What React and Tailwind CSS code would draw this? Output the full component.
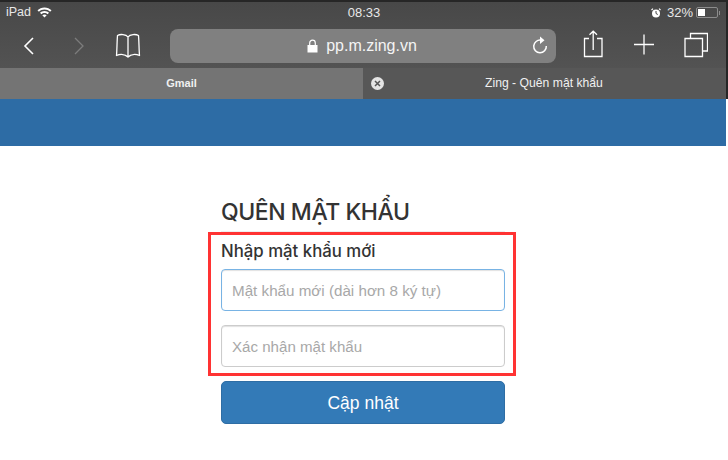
import React from "react";

const Sans = '[font-family:"Liberation_Sans",Arial,sans-serif]';

const ToolIcon = ({ w, children }) => (
  <svg width={w} height="44" viewBox={`0 0 ${w} 44`} fill="none" stroke="#fff" strokeWidth="1.3" className="shrink-0">
    {children}
  </svg>
);

const App = () => {
  return (
    <div className={`w-[728px] h-[460px] overflow-hidden bg-white ${Sans}`}>
      {/* Safari chrome */}
      <div className="border-t-2 border-r-2 border-[#262626] bg-gradient-to-b from-[#484848] to-[#585858] text-white">
        {/* Status bar */}
        <div className="grid grid-cols-3 items-center h-[21px] pl-[6px] pr-[6px] text-[13px] leading-none text-[#e8e8e8]">
          <div className="flex items-center gap-[6px]">
            <span className="text-[12.500px]">iPad</span>
            <svg width="15" height="11" viewBox="0 0 15 11" fill="#fff">
              <path d="M7.5 0.5C4.7 0.5 2.3 1.6 0.5 3.3L1.9 4.8C3.4 3.4 5.3 2.5 7.5 2.5S11.6 3.4 13.1 4.8L14.5 3.3C12.7 1.6 10.3 0.5 7.5 0.5Z" />
              <path d="M7.5 4C5.7 4 4.2 4.7 3 5.8L4.4 7.2C5.2 6.5 6.3 6 7.5 6S9.8 6.5 10.6 7.2L12 5.8C10.8 4.7 9.3 4 7.5 4Z" />
              <path d="M7.5 7.4C6.6 7.4 5.9 7.7 5.3 8.2L7.5 10.6L9.7 8.2C9.1 7.7 8.4 7.4 7.5 7.4Z" />
            </svg>
          </div>
          <div className="text-center pl-[2px]">08:33</div>
          <div className="flex items-center justify-end gap-[3px]">
            <svg width="10" height="10" viewBox="0 0 10 10" className="mr-[3px]">
              <circle cx="5" cy="5.4" r="4" fill="#fff" />
              <path d="M5 3V5.5L6.8 6.5" stroke="#444" strokeWidth="1" fill="none" />
              <path d="M0.5 2L2 0.6M9.5 2L8 0.6" stroke="#fff" strokeWidth="1.2" />
            </svg>
            <span>32%</span>
            <div className="flex items-center">
              <div className="w-[22px] h-[11px] border border-[#8c8c8c] rounded-[2px] p-px">
                <div className="w-[7px] h-full bg-white" />
              </div>
              <div className="w-[1px] h-[4px] ml-[1px] bg-[#8c8c8c]" />
            </div>
          </div>
        </div>

        {/* Toolbar */}
        <div className="flex items-center h-[45px]">
          <div className="ml-[20px] w-[150px] flex items-center">
            <ToolIcon w={18}>
              <path d="M13 14L5 22L13 30" strokeWidth="1.6" />
            </ToolIcon>
            <div className="w-[32px]" />
            <ToolIcon w={16}>
              <path d="M5 14L13 22L5 30" stroke="#7c7c7c" strokeWidth="1.3" />
            </ToolIcon>
            <div className="w-[29px]" />
            <ToolIcon w={26}>
              <path d="M13 13C11 10 5 10 2.5 11.5C2 17 2 26 1.5 31.5C5 30 10 30 13 33C16 30 21 30 24.500 31.500C24 26 24 17 23.500 11.500C21 10 15 10 13 13ZM13 13V33" strokeLinejoin="round" />
            </ToolIcon>
          </div>
          <div className="w-[386px] h-[34px] rounded-[8px] bg-[#808080] flex items-center relative">
            <div className="flex-1 flex items-center justify-center gap-[8px] text-[16px] text-[#f4f4f4] pr-[2px]">
              <svg width="11" height="14" viewBox="0 0 11 14" fill="#fff">
                <path d="M0.500 6H10.500V13.500H0.500Z" />
                <path d="M2.700 6V4A2.800 2.800 0 0 1 8.300 4V6" fill="none" stroke="#fff" strokeWidth="1.200" />
              </svg>
              <span>pp.m.zing.vn</span>
            </div>
            <svg width="18" height="20" viewBox="0 0 18 20" fill="none" className="absolute right-[7px] top-[7px]">
              <path d="M10 4.200A6.300 6.300 0 1 0 15.300 10" stroke="#fff" strokeWidth="1.500" />
              <path d="M9 0.500L13.500 4.300L9 8Z" fill="#fff" />
            </svg>
          </div>
          <div className="ml-[27px] flex items-center">
            <ToolIcon w={20}>
              <path d="M6 14.500H1.500V32.500H19V14.500H14M10.200 26V7.500M6.500 10.800L10.200 7.200L14 10.800" />
            </ToolIcon>
            <div className="w-[31px]" />
            <ToolIcon w={20}>
              <path d="M0 20.500H20M10 10.500V30.500" />
            </ToolIcon>
            <div className="w-[30px]" />
            <ToolIcon w={24}>
              <path d="M1 14.500H18.500V32.500H1Z" />
              <path d="M6.500 14.500V9.500H23.500V27H18.500" />
            </ToolIcon>
          </div>
        </div>

        {/* Tabs */}
        <div className="flex h-[31px] text-[11px] leading-none text-white">
          <div className="w-[363px] bg-[#747474] flex items-center justify-center font-bold text-[#f0f0f0]">Gmail</div>
          <div className="flex-1 bg-[#575757] flex items-center relative">
            <svg width="13" height="13" viewBox="0 0 13 13" className="absolute left-[8px] top-[9px]">
              <circle cx="6.500" cy="6.500" r="6.500" fill="#e4e4e4" />
              <path d="M4 4L9 9M9 4L4 9" stroke="#555" strokeWidth="1.500" />
            </svg>
            <span className="ml-[122px] text-[12.200px] text-[#f0f0f0]">Zing - Quên mật khẩu</span>
          </div>
        </div>
      </div>

      {/* Blue header band */}
      <div className="h-[47px] mr-[2px] bg-[#2d6ca5]" />

      {/* Form */}
      <div className="ml-[221px] w-[284px] pt-[51px] text-[#333]">
        <h1 className="text-[23px] leading-[30px] font-[Inter] font-medium tracking-[-0.45px] pb-[4px] border-b border-[#eeeeee]">QUÊN MẬT KHẨU</h1>
        <div className="-ml-[13px] -mr-[11px] border-[3px] border-[#ff3333] pl-[10px] pr-[8px] pt-[6px] h-[144px]">
          <div className="text-[16.800px] leading-[20px] font-[Inter] font-medium mb-[8px]">Nhập mật khẩu mới</div>
          <input
            type="password"
            placeholder="Mật khẩu mới (dài hơn 8 ký tự)"
            className={`block w-full h-[42px] px-[10px] text-[15.200px] bg-white rounded-[4px] border border-[#78b3e4] shadow-[inset_0_1px_1px_rgba(0,0,0,0.12)] outline-none placeholder:text-[#a8a8a8] ${Sans}`}
          />
          <input
            type="password"
            placeholder="Xác nhận mật khẩu"
            className={`block w-full h-[42px] mt-[14px] px-[10px] text-[15.100px] bg-white rounded-[4px] border border-[#cccccc] shadow-[inset_0_1px_1px_rgba(0,0,0,0.12)] outline-none placeholder:text-[#a8a8a8] ${Sans}`}
          />
        </div>
        <button className="block w-full h-[43px] mt-[5px] pt-[1px] rounded-[5px] bg-[#337ab7] border border-[#2e6da4] text-white text-[17.500px]">
          Cập nhật
        </button>
      </div>
    </div>
  );
};

export default App;
